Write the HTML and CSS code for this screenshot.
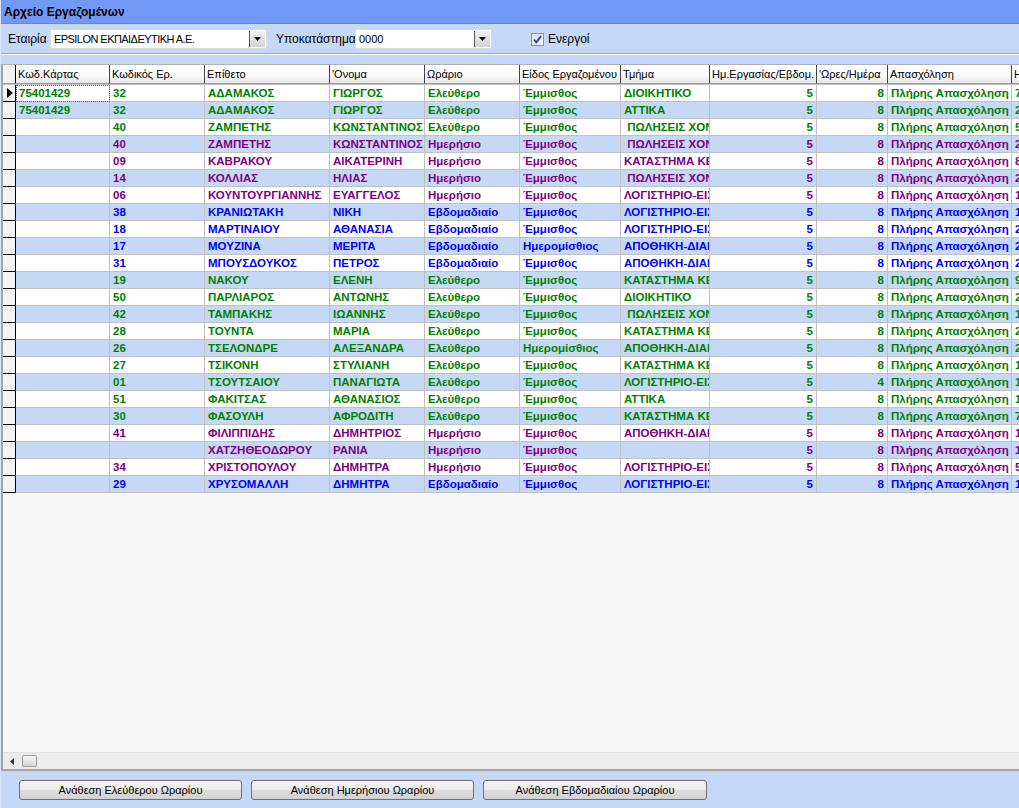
FILE: index.html
```html
<!DOCTYPE html>
<html lang="el">
<head>
<meta charset="utf-8">
<title>Αρχείο Εργαζομένων</title>
<link rel="stylesheet" href="styles.css">
</head>
<body>
<div class="win">
  <div class="title">Αρχείο Εργαζομένων</div>
  <div class="toolbar">
    <span class="lbl lbl1">Εταιρία</span>
    <div class="combo combo1"><span class="ctext ctext1">EPSILON ΕΚΠΑΙΔΕΥΤΙΚΗ Α.Ε.</span><span class="ddbtn"><svg width="7" height="4" viewBox="0 0 7 4"><polygon points="0,0 7,0 3.5,4" fill="#000"/></svg></span></div>
    <span class="lbl lbl2">Υποκατάστημα</span>
    <div class="combo combo2"><span class="ctext">0000</span><span class="ddbtn"><svg width="7" height="4" viewBox="0 0 7 4"><polygon points="0,0 7,0 3.5,4" fill="#000"/></svg></span></div>
    <span class="chk"><svg width="13" height="13" viewBox="0 0 13 13"><defs><linearGradient id="cb" x1="0" y1="0" x2="1" y2="1"><stop offset="0" stop-color="#dcdcdc"/><stop offset="1" stop-color="#fbfbfb"/></linearGradient></defs><rect x="0.5" y="0.5" width="12" height="12" fill="url(#cb)" stroke="#8e8f8f"/><path d="M3 6.5 L5.3 9.2 L10 3.2" fill="none" stroke="#2147c9" stroke-width="1.9"/></svg></span>
    <span class="lbl lbl3">Ενεργοί</span>
  </div>
  <div class="sep"></div>
  <div class="band"></div>
  <div class="grid">
    <div class="hrow">
      <div class="hc rhh"></div>
      <div class="hc">Κωδ.Κάρτας</div>
      <div class="hc">Κωδικός Ερ.</div>
      <div class="hc">Επίθετο</div>
      <div class="hc">'Ονομα</div>
      <div class="hc">Ωράριο</div>
      <div class="hc">Είδος Εργαζομένου</div>
      <div class="hc">Τμήμα</div>
      <div class="hc">Ημ.Εργασίας/Εβδομ.</div>
      <div class="hc">'Ωρες/Ημέρα</div>
      <div class="hc">Απασχόληση</div>
      <div class="hc">Ημ/νία Πρόσληψης</div>
    </div>
    <div class="rows">
      <div class="row g"><div class="rh"><svg class="arrow" width="6" height="10" viewBox="0 0 6 10"><polygon points="0,0 6,5 0,10" fill="#000"/></svg></div><div class="c focus">75401429</div><div class="c">32</div><div class="c">ΑΔΑΜΑΚΟΣ</div><div class="c">ΓΙΩΡΓΟΣ</div><div class="c">Ελεύθερο</div><div class="c">Έμμισθος</div><div class="c">ΔΙΟΙΚΗΤΙΚΟ</div><div class="c n">5</div><div class="c n">8</div><div class="c">Πλήρης Απασχόληση</div><div class="c">7/1/2005</div></div>
      <div class="row g"><div class="rh"></div><div class="c">75401429</div><div class="c">32</div><div class="c">ΑΔΑΜΑΚΟΣ</div><div class="c">ΓΙΩΡΓΟΣ</div><div class="c">Ελεύθερο</div><div class="c">Έμμισθος</div><div class="c">ΑΤΤΙΚΑ</div><div class="c n">5</div><div class="c n">8</div><div class="c">Πλήρης Απασχόληση</div><div class="c">2/3/2008</div></div>
      <div class="row g"><div class="rh"></div><div class="c"></div><div class="c">40</div><div class="c">ΖΑΜΠΕΤΗΣ</div><div class="c">ΚΩΝΣΤΑΝΤΙΝΟΣ</div><div class="c">Ελεύθερο</div><div class="c">Έμμισθος</div><div class="c"> ΠΩΛΗΣΕΙΣ ΧΟΝΔΡΙΚΗΣ</div><div class="c n">5</div><div class="c n">8</div><div class="c">Πλήρης Απασχόληση</div><div class="c">5/5/2003</div></div>
      <div class="row p"><div class="rh"></div><div class="c"></div><div class="c">40</div><div class="c">ΖΑΜΠΕΤΗΣ</div><div class="c">ΚΩΝΣΤΑΝΤΙΝΟΣ</div><div class="c">Ημερήσιο</div><div class="c">Έμμισθος</div><div class="c"> ΠΩΛΗΣΕΙΣ ΧΟΝΔΡΙΚΗΣ</div><div class="c n">5</div><div class="c n">8</div><div class="c">Πλήρης Απασχόληση</div><div class="c">2/2/2004</div></div>
      <div class="row p"><div class="rh"></div><div class="c"></div><div class="c">09</div><div class="c">ΚΑΒΡΑΚΟΥ</div><div class="c">ΑΙΚΑΤΕΡΙΝΗ</div><div class="c">Ημερήσιο</div><div class="c">Έμμισθος</div><div class="c">ΚΑΤΑΣΤΗΜΑ ΚΕΝΤΡΟ</div><div class="c n">5</div><div class="c n">8</div><div class="c">Πλήρης Απασχόληση</div><div class="c">8/9/2006</div></div>
      <div class="row p"><div class="rh"></div><div class="c"></div><div class="c">14</div><div class="c">ΚΟΛΛΙΑΣ</div><div class="c">ΗΛΙΑΣ</div><div class="c">Ημερήσιο</div><div class="c">Έμμισθος</div><div class="c"> ΠΩΛΗΣΕΙΣ ΧΟΝΔΡΙΚΗΣ</div><div class="c n">5</div><div class="c n">8</div><div class="c">Πλήρης Απασχόληση</div><div class="c">2/4/2007</div></div>
      <div class="row p"><div class="rh"></div><div class="c"></div><div class="c">06</div><div class="c">ΚΟΥΝΤΟΥΡΓΙΑΝΝΗΣ</div><div class="c">ΕΥΑΓΓΕΛΟΣ</div><div class="c">Ημερήσιο</div><div class="c">Έμμισθος</div><div class="c">ΛΟΓΙΣΤΗΡΙΟ-ΕΙΣΠΡΑΞΕΙΣ</div><div class="c n">5</div><div class="c n">8</div><div class="c">Πλήρης Απασχόληση</div><div class="c">1/6/2002</div></div>
      <div class="row b"><div class="rh"></div><div class="c"></div><div class="c">38</div><div class="c">ΚΡΑΝΙΩΤΑΚΗ</div><div class="c">ΝΙΚΗ</div><div class="c">Εβδομαδιαίο</div><div class="c">Έμμισθος</div><div class="c">ΛΟΓΙΣΤΗΡΙΟ-ΕΙΣΠΡΑΞΕΙΣ</div><div class="c n">5</div><div class="c n">8</div><div class="c">Πλήρης Απασχόληση</div><div class="c">1/10/2008</div></div>
      <div class="row b"><div class="rh"></div><div class="c"></div><div class="c">18</div><div class="c">ΜΑΡΤΙΝΑΙΟΥ</div><div class="c">ΑΘΑΝΑΣΙΑ</div><div class="c">Εβδομαδιαίο</div><div class="c">Έμμισθος</div><div class="c">ΛΟΓΙΣΤΗΡΙΟ-ΕΙΣΠΡΑΞΕΙΣ</div><div class="c n">5</div><div class="c n">8</div><div class="c">Πλήρης Απασχόληση</div><div class="c">2/11/2005</div></div>
      <div class="row b"><div class="rh"></div><div class="c"></div><div class="c">17</div><div class="c">ΜΟΥΖΙΝΑ</div><div class="c">ΜΕΡΙΤΑ</div><div class="c">Εβδομαδιαίο</div><div class="c">Ημερομίσθιος</div><div class="c">ΑΠΟΘΗΚΗ-ΔΙΑΝΟΜΗ</div><div class="c n">5</div><div class="c n">8</div><div class="c">Πλήρης Απασχόληση</div><div class="c">2/5/2006</div></div>
      <div class="row b"><div class="rh"></div><div class="c"></div><div class="c">31</div><div class="c">ΜΠΟΥΣΔΟΥΚΟΣ</div><div class="c">ΠΕΤΡΟΣ</div><div class="c">Εβδομαδιαίο</div><div class="c">Έμμισθος</div><div class="c">ΑΠΟΘΗΚΗ-ΔΙΑΝΟΜΗ</div><div class="c n">5</div><div class="c n">8</div><div class="c">Πλήρης Απασχόληση</div><div class="c">2/1/2007</div></div>
      <div class="row g"><div class="rh"></div><div class="c"></div><div class="c">19</div><div class="c">ΝΑΚΟΥ</div><div class="c">ΕΛΕΝΗ</div><div class="c">Ελεύθερο</div><div class="c">Έμμισθος</div><div class="c">ΚΑΤΑΣΤΗΜΑ ΚΕΝΤΡΟ</div><div class="c n">5</div><div class="c n">8</div><div class="c">Πλήρης Απασχόληση</div><div class="c">9/3/2004</div></div>
      <div class="row g"><div class="rh"></div><div class="c"></div><div class="c">50</div><div class="c">ΠΑΡΛΙΑΡΟΣ</div><div class="c">ΑΝΤΩΝΗΣ</div><div class="c">Ελεύθερο</div><div class="c">Έμμισθος</div><div class="c">ΔΙΟΙΚΗΤΙΚΟ</div><div class="c n">5</div><div class="c n">8</div><div class="c">Πλήρης Απασχόληση</div><div class="c">2/7/2009</div></div>
      <div class="row g"><div class="rh"></div><div class="c"></div><div class="c">42</div><div class="c">ΤΑΜΠΑΚΗΣ</div><div class="c">ΙΩΑΝΝΗΣ</div><div class="c">Ελεύθερο</div><div class="c">Έμμισθος</div><div class="c"> ΠΩΛΗΣΕΙΣ ΧΟΝΔΡΙΚΗΣ</div><div class="c n">5</div><div class="c n">8</div><div class="c">Πλήρης Απασχόληση</div><div class="c">1/9/2008</div></div>
      <div class="row g"><div class="rh"></div><div class="c"></div><div class="c">28</div><div class="c">ΤΟΥΝΤΑ</div><div class="c">ΜΑΡΙΑ</div><div class="c">Ελεύθερο</div><div class="c">Έμμισθος</div><div class="c">ΚΑΤΑΣΤΗΜΑ ΚΕΝΤΡΟ</div><div class="c n">5</div><div class="c n">8</div><div class="c">Πλήρης Απασχόληση</div><div class="c">2/2/2006</div></div>
      <div class="row g"><div class="rh"></div><div class="c"></div><div class="c">26</div><div class="c">ΤΣΕΛΟΝΔΡΕ</div><div class="c">ΑΛΕΞΑΝΔΡΑ</div><div class="c">Ελεύθερο</div><div class="c">Ημερομίσθιος</div><div class="c">ΑΠΟΘΗΚΗ-ΔΙΑΝΟΜΗ</div><div class="c n">5</div><div class="c n">8</div><div class="c">Πλήρης Απασχόληση</div><div class="c">2/6/2007</div></div>
      <div class="row g"><div class="rh"></div><div class="c"></div><div class="c">27</div><div class="c">ΤΣΙΚΟΝΗ</div><div class="c">ΣΤΥΛΙΑΝΗ</div><div class="c">Ελεύθερο</div><div class="c">Έμμισθος</div><div class="c">ΚΑΤΑΣΤΗΜΑ ΚΕΝΤΡΟ</div><div class="c n">5</div><div class="c n">8</div><div class="c">Πλήρης Απασχόληση</div><div class="c">1/4/2005</div></div>
      <div class="row g"><div class="rh"></div><div class="c"></div><div class="c">01</div><div class="c">ΤΣΟΥΤΣΑΙΟΥ</div><div class="c">ΠΑΝΑΓΙΩΤΑ</div><div class="c">Ελεύθερο</div><div class="c">Έμμισθος</div><div class="c">ΛΟΓΙΣΤΗΡΙΟ-ΕΙΣΠΡΑΞΕΙΣ</div><div class="c n">5</div><div class="c n">4</div><div class="c">Πλήρης Απασχόληση</div><div class="c">1/2/2001</div></div>
      <div class="row g"><div class="rh"></div><div class="c"></div><div class="c">51</div><div class="c">ΦΑΚΙΤΣΑΣ</div><div class="c">ΑΘΑΝΑΣΙΟΣ</div><div class="c">Ελεύθερο</div><div class="c">Έμμισθος</div><div class="c">ΑΤΤΙΚΑ</div><div class="c n">5</div><div class="c n">8</div><div class="c">Πλήρης Απασχόληση</div><div class="c">1/3/2009</div></div>
      <div class="row g"><div class="rh"></div><div class="c"></div><div class="c">30</div><div class="c">ΦΑΣΟΥΛΗ</div><div class="c">ΑΦΡΟΔΙΤΗ</div><div class="c">Ελεύθερο</div><div class="c">Έμμισθος</div><div class="c">ΚΑΤΑΣΤΗΜΑ ΚΕΝΤΡΟ</div><div class="c n">5</div><div class="c n">8</div><div class="c">Πλήρης Απασχόληση</div><div class="c">7/8/2006</div></div>
      <div class="row p"><div class="rh"></div><div class="c"></div><div class="c">41</div><div class="c">ΦΙΛΙΠΠΙΔΗΣ</div><div class="c">ΔΗΜΗΤΡΙΟΣ</div><div class="c">Ημερήσιο</div><div class="c">Έμμισθος</div><div class="c">ΑΠΟΘΗΚΗ-ΔΙΑΝΟΜΗ</div><div class="c n">5</div><div class="c n">8</div><div class="c">Πλήρης Απασχόληση</div><div class="c">1/12/2008</div></div>
      <div class="row p"><div class="rh"></div><div class="c"></div><div class="c"></div><div class="c">ΧΑΤΖΗΘΕΟΔΩΡΟΥ</div><div class="c">ΡΑΝΙΑ</div><div class="c">Ημερήσιο</div><div class="c">Έμμισθος</div><div class="c"></div><div class="c n">5</div><div class="c n">8</div><div class="c">Πλήρης Απασχόληση</div><div class="c">1/1/2010</div></div>
      <div class="row p"><div class="rh"></div><div class="c"></div><div class="c">34</div><div class="c">ΧΡΙΣΤΟΠΟΥΛΟΥ</div><div class="c">ΔΗΜΗΤΡΑ</div><div class="c">Ημερήσιο</div><div class="c">Έμμισθος</div><div class="c">ΛΟΓΙΣΤΗΡΙΟ-ΕΙΣΠΡΑΞΕΙΣ</div><div class="c n">5</div><div class="c n">8</div><div class="c">Πλήρης Απασχόληση</div><div class="c">5/5/2007</div></div>
      <div class="row b"><div class="rh"></div><div class="c"></div><div class="c">29</div><div class="c">ΧΡΥΣΟΜΑΛΛΗ</div><div class="c">ΔΗΜΗΤΡΑ</div><div class="c">Εβδομαδιαίο</div><div class="c">Έμμισθος</div><div class="c">ΛΟΓΙΣΤΗΡΙΟ-ΕΙΣΠΡΑΞΕΙΣ</div><div class="c n">5</div><div class="c n">8</div><div class="c">Πλήρης Απασχόληση</div><div class="c">1/3/2006</div></div>
    </div>
    <div class="empty"></div>
    <div class="hscroll">
      <svg class="sarrow" width="4" height="7" viewBox="0 0 4 7"><polygon points="4,0 4,7 0,3.5" fill="#333"/></svg>
      <div class="thumb"></div>
    </div>
  </div>
  <div class="footer">
    <button class="btn">Ανάθεση Ελεύθερου Ωραρίου</button>
    <button class="btn">Ανάθεση Ημερήσιου Ωραρίου</button>
    <button class="btn btn3">Ανάθεση Εβδομαδιαίου Ωραρίου</button>
  </div>
</div>
</body>
</html>
```
FILE: styles.css
```css
* { box-sizing: border-box; margin: 0; padding: 0; }
html, body { width: 1019px; height: 808px; overflow: hidden; }
body {
  font-family: "Liberation Sans", Arial, sans-serif;
  font-size: 11px;
  color: #000;
  background: #c5d9f7;
}
.win {
  display: flex;
  flex-direction: column;
  height: 808px;
  border-left: 1px solid #d9e5fb;
  overflow: hidden;
}
.title {
  height: 24px;
  flex: none;
  background: #7299f5;
  border-bottom: 1px solid #6488e0;
  font-weight: bold;
  font-size: 12px;
  line-height: 14px;
  padding: 5px 0 0 3px;
}
.toolbar {
  height: 29px;
  flex: none;
  display: flex;
  align-items: center;
  padding: 1px 0 0 7px;
}
.lbl { font-size: 12px; line-height: 14px; }
.lbl1 { width: 42px; }
.lbl2 { width: 79px; margin-left: 9px; }
.lbl3 { margin-left: 4px; }
.combo {
  height: 20px;
  background: #fff;
  border: 1px solid #dcdcdc;
  display: flex;
  align-items: center;
  justify-content: space-between;
  padding: 0 1px 0 3px;
}
.combo1 { width: 217px; }
.combo2 { width: 137px; }
.ctext { font-size: 11px; white-space: nowrap; }
.ctext1 { letter-spacing: -0.55px; }
.ddbtn {
  width: 16px;
  height: 16px;
  border-left: 1px solid #555;
  background: linear-gradient(#f2f2f2, #d2d2d2);
  display: flex;
  align-items: center;
  justify-content: center;
}
.chk { margin-left: 39px; display: flex; }
.sep {
  height: 2px;
  flex: none;
  border-top: 1px solid #a3a3a3;
  border-bottom: 1px solid #fff;
}
.band { height: 9px; flex: none; }
.grid {
  flex: 1;
  display: flex;
  flex-direction: column;
  background: #f7f7f7;
  border-left: 2px solid #a3a3a3;
  border-top: 1px solid #b0b0b0;
  border-bottom: 2px solid #a8a8a8;
  overflow: hidden;
  min-height: 0;
}
.hrow, .row {
  display: grid;
  grid-template-columns: 13px 94px 95px 125px 95px 95px 101px 89px 107px 71px 124px 100px;
  width: 1109px;
  flex: none;
}
.hc {
  height: 19px;
  line-height: 18px;
  padding-left: 2px;
  font-size: 11px;
  white-space: nowrap;
  overflow: hidden;
  background: linear-gradient(#ffffff 0%, #fbfbfb 55%, #e6e6e6 100%);
  border-right: 1px solid #444;
  border-bottom: 1px solid #9c9c9c;
}
.hc.rhh { background: #f2f2f2; border-right-color: #000; }
.rows { border-top: 1px solid #c0c0c0; flex: none; }
.row:nth-child(even) { background: #c5d9f7; }
.row:nth-child(odd) { background: #fff; }
.row.g { color: #008000; }
.row.p { color: #800080; }
.row.b { color: #0000ff; }
.c {
  height: 17px;
  line-height: 16px;
  padding: 0 3px;
  font-weight: bold;
  font-size: 11.5px;
  white-space: pre;
  overflow: hidden;
  border-right: 1px solid #c0c0c0;
  border-bottom: 1px solid #c0c0c0;
}
.c.n { text-align: right; }
.c.focus { outline: 1px dotted #9a5a10; outline-offset: -1px; }
.rh {
  height: 17px;
  background: #f4f4f4;
  border-right: 1px solid #000;
  border-bottom: 1px solid #000;
  display: flex;
  align-items: center;
  padding-left: 4px;
}
.empty { flex: 1; background: #f7f7f7; }
.hscroll {
  height: 17px;
  flex: none;
  background: #ececec;
  border-top: 1px solid #e1e1e1;
  display: flex;
  align-items: center;
  padding-left: 7px;
}
.thumb {
  margin-left: 8px;
  width: 15px;
  height: 12px;
  border: 1px solid #9b9b9b;
  border-radius: 2px;
  background: linear-gradient(#f7f7f7, #d6d6d6);
}
.footer {
  flex: none;
  height: 37px;
  display: flex;
  align-items: flex-start;
  gap: 9px;
  padding: 9px 0 0 18px;
}
.btn {
  width: 223px;
  height: 20px;
  font-family: "Liberation Sans", Arial, sans-serif;
  font-size: 11px;
  color: #000;
  border: 1px solid #707070;
  border-radius: 3px;
  background: linear-gradient(#f3f3f3 0%, #ebebeb 50%, #dddddd 51%, #d2d2d2 100%);
}
.btn3 { width: 224px; }
```
